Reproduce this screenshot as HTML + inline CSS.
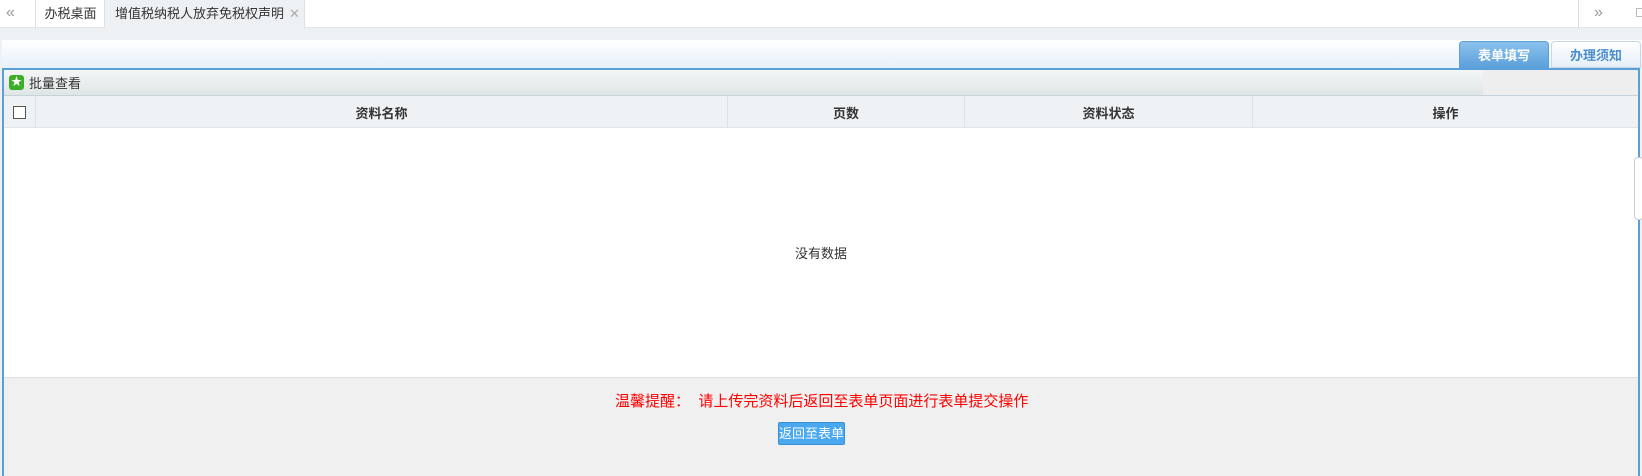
<!DOCTYPE html>
<html><head><meta charset="utf-8"><style>
*{margin:0;padding:0;box-sizing:border-box}
body{width:1642px;height:476px;overflow:hidden;background:#eef1f4;font-family:"Liberation Sans","Noto Sans CJK SC",sans-serif;font-size:12px;color:#333;position:relative}
.abs{position:absolute;white-space:nowrap}
</style></head><body>
<div class="abs" style="left:0;top:0;width:1642px;height:28px;background:#fff;border-bottom:1px solid #e3e6ea"></div>
<div class="abs" style="left:6px;top:4px;color:#999;font-size:16px">«</div>
<div class="abs" style="left:35px;top:0;width:70px;height:28px;border-left:1px solid #e0e0e0;font-size:13px;line-height:28px;text-align:center">办税桌面</div>
<div class="abs" style="left:104px;top:0;width:201px;height:28px;background:#eef1f4;border-left:1px solid #e0e0e0;border-right:1px solid #e0e0e0;font-size:13px;line-height:28px;padding-left:10px">增值税纳税人放弃免税权声明<span style="color:#aaa;margin-left:5px">✕</span></div>
<div class="abs" style="left:1578px;top:0;width:1px;height:28px;background:#ddd"></div>
<div class="abs" style="left:1594px;top:4px;color:#999;font-size:16px">»</div>
<div class="abs" style="left:1636px;top:8px;width:8px;height:9px;border:1px solid #bbb"></div>

<div class="abs" style="left:2px;top:40px;width:1640px;height:28px;background:linear-gradient(#fff,#e8f0fa)"></div>
<div class="abs" style="left:1459px;top:41px;width:90px;height:28px;background:linear-gradient(#8cc2ec,#5a9fdb);border:1px solid #5b9fd8;border-radius:4px 4px 0 0;color:#fff;font-weight:bold;font-size:13px;text-align:center;line-height:28px">表单填写</div>
<div class="abs" style="left:1551px;top:41px;width:90px;height:27px;background:linear-gradient(#fff,#e6eff9);border:1px solid #c9d6e3;border-radius:4px 4px 0 0;color:#4b8ed0;font-weight:bold;font-size:13px;text-align:center;line-height:28px">办理须知</div>

<div class="abs" style="left:2px;top:68px;width:1638px;height:408px;border:2px solid #5b9fd8;border-bottom:none;background:#fff"></div>
<div class="abs" style="left:4px;top:70px;width:1479px;height:25px;background:linear-gradient(#f4f6f6,#dfe6e6)"></div>
<div class="abs" style="left:1483px;top:70px;width:155px;height:25px;background:#eeeeee"></div>
<div class="abs" style="left:9px;top:75px;width:15px;height:15px;background:#3eae2a;border-radius:3px;color:#fff;font-size:11px;line-height:15px;text-align:center">★</div>
<div class="abs" style="left:29px;top:73px;font-size:13px">批量查看</div>
<div class="abs" style="left:4px;top:95px;width:1634px;height:33px;background:#eff2f5;border-top:1px solid #c6d2d8;border-bottom:1px solid #e0e4e8;font-weight:bold;font-size:13px">
<div class="abs" style="left:9px;top:10px;width:13px;height:13px;border:1px solid #555;background:#fff"></div>
<div class="abs" style="left:31px;top:0;width:1px;height:31px;background:#dde1e5"></div>
<div class="abs" style="left:723px;top:0;width:1px;height:31px;background:#dde1e5"></div>
<div class="abs" style="left:960px;top:0;width:1px;height:31px;background:#dde1e5"></div>
<div class="abs" style="left:1248px;top:0;width:1px;height:31px;background:#dde1e5"></div>
<div class="abs" style="left:32px;width:691px;top:7px;text-align:center">资料名称</div>
<div class="abs" style="left:724px;width:236px;top:7px;text-align:center">页数</div>
<div class="abs" style="left:961px;width:287px;top:7px;text-align:center">资料状态</div>
<div class="abs" style="left:1249px;width:385px;top:7px;text-align:center">操作</div>
</div>
<div class="abs" style="left:4px;top:243px;width:1634px;text-align:center;font-size:13px">没有数据</div>
<div class="abs" style="left:1634px;top:157px;width:10px;height:63px;border:1px solid #ccd;border-radius:4px;background:#fff"></div>
<div class="abs" style="left:4px;top:377px;width:1634px;height:99px;background:#f0f0f0;border-top:1px solid #e0e0e0"></div>
<div class="abs" style="left:615px;top:390px;color:#f00;font-size:15px;white-space:pre">温馨提醒：  请上传完资料后返回至表单页面进行表单提交操作</div>
<div class="abs" style="left:778px;top:422px;width:67px;height:23px;background:#4aa8ee;border:1px solid #3a8fd0;border-radius:2px;color:#fff;font-size:13px;line-height:21px;text-align:center">返回至表单</div>
</body></html>
